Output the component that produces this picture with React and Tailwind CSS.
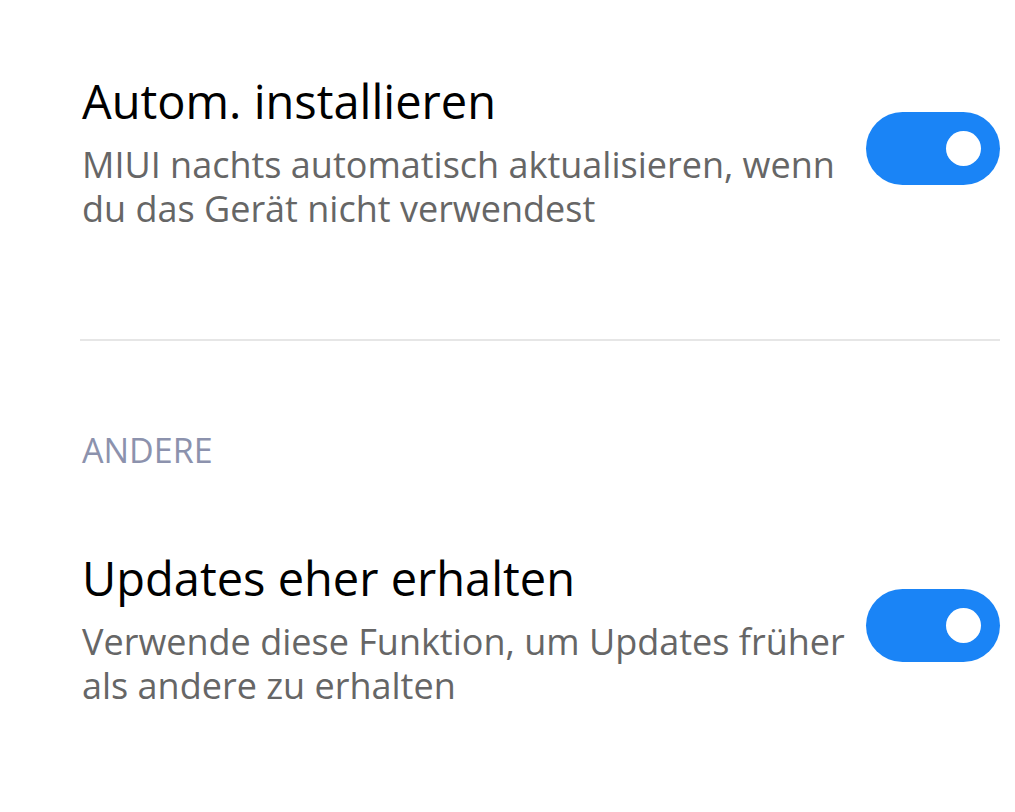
import React, { useState } from "react";

const Toggle = ({ on, onClick }) => (
    <button
        onClick={onClick}
        className={`shrink-0 mt-[39px] w-[134px] h-[73px] rounded-full flex items-center px-[19px] ${on ? "bg-[#1a84f6] justify-end" : "bg-[#d9d9d9] justify-start"}`}
    >
        <span className="block w-[35px] h-[35px] rounded-full bg-white" />
    </button>
);

const SettingRow = ({ title, desc, on, onToggle }) => (
    <div className="flex items-start justify-between">
        <div className="flex flex-col w-[770px]">
            <h2 className="text-[47px] leading-[56px] text-black">{title}</h2>
            <p className="text-[36px] leading-[44px] text-[#666666] mt-[14px]">{desc}</p>
        </div>
        <Toggle on={on} onClick={onToggle} />
    </div>
);

const App = () => {
    const [autoInstall, setAutoInstall] = useState(true);
    const [earlyUpdates, setEarlyUpdates] = useState(true);

    return (
        <div className="w-[1015px] h-[812px] bg-white pl-[82px] pr-[15px] pt-[73px] font-['Open_Sans',sans-serif] overflow-hidden">
            <SettingRow
                title="Autom. installieren"
                desc="MIUI nachts automatisch aktualisieren, wenn du das Gerät nicht verwendest"
                on={autoInstall}
                onToggle={() => setAutoInstall(!autoInstall)}
            />
            <div className="h-[2px] bg-[#e6e6e6] ml-[-2px] mt-[108px]" />
            <div className="mt-[89px] text-[34px] leading-[40px] text-[#8c92ad]">ANDERE</div>
            <div className="mt-[80px]">
                <SettingRow
                    title="Updates eher erhalten"
                    desc="Verwende diese Funktion, um Updates früher als andere zu erhalten"
                    on={earlyUpdates}
                    onToggle={() => setEarlyUpdates(!earlyUpdates)}
                />
            </div>
        </div>
    );
};

export default App;
